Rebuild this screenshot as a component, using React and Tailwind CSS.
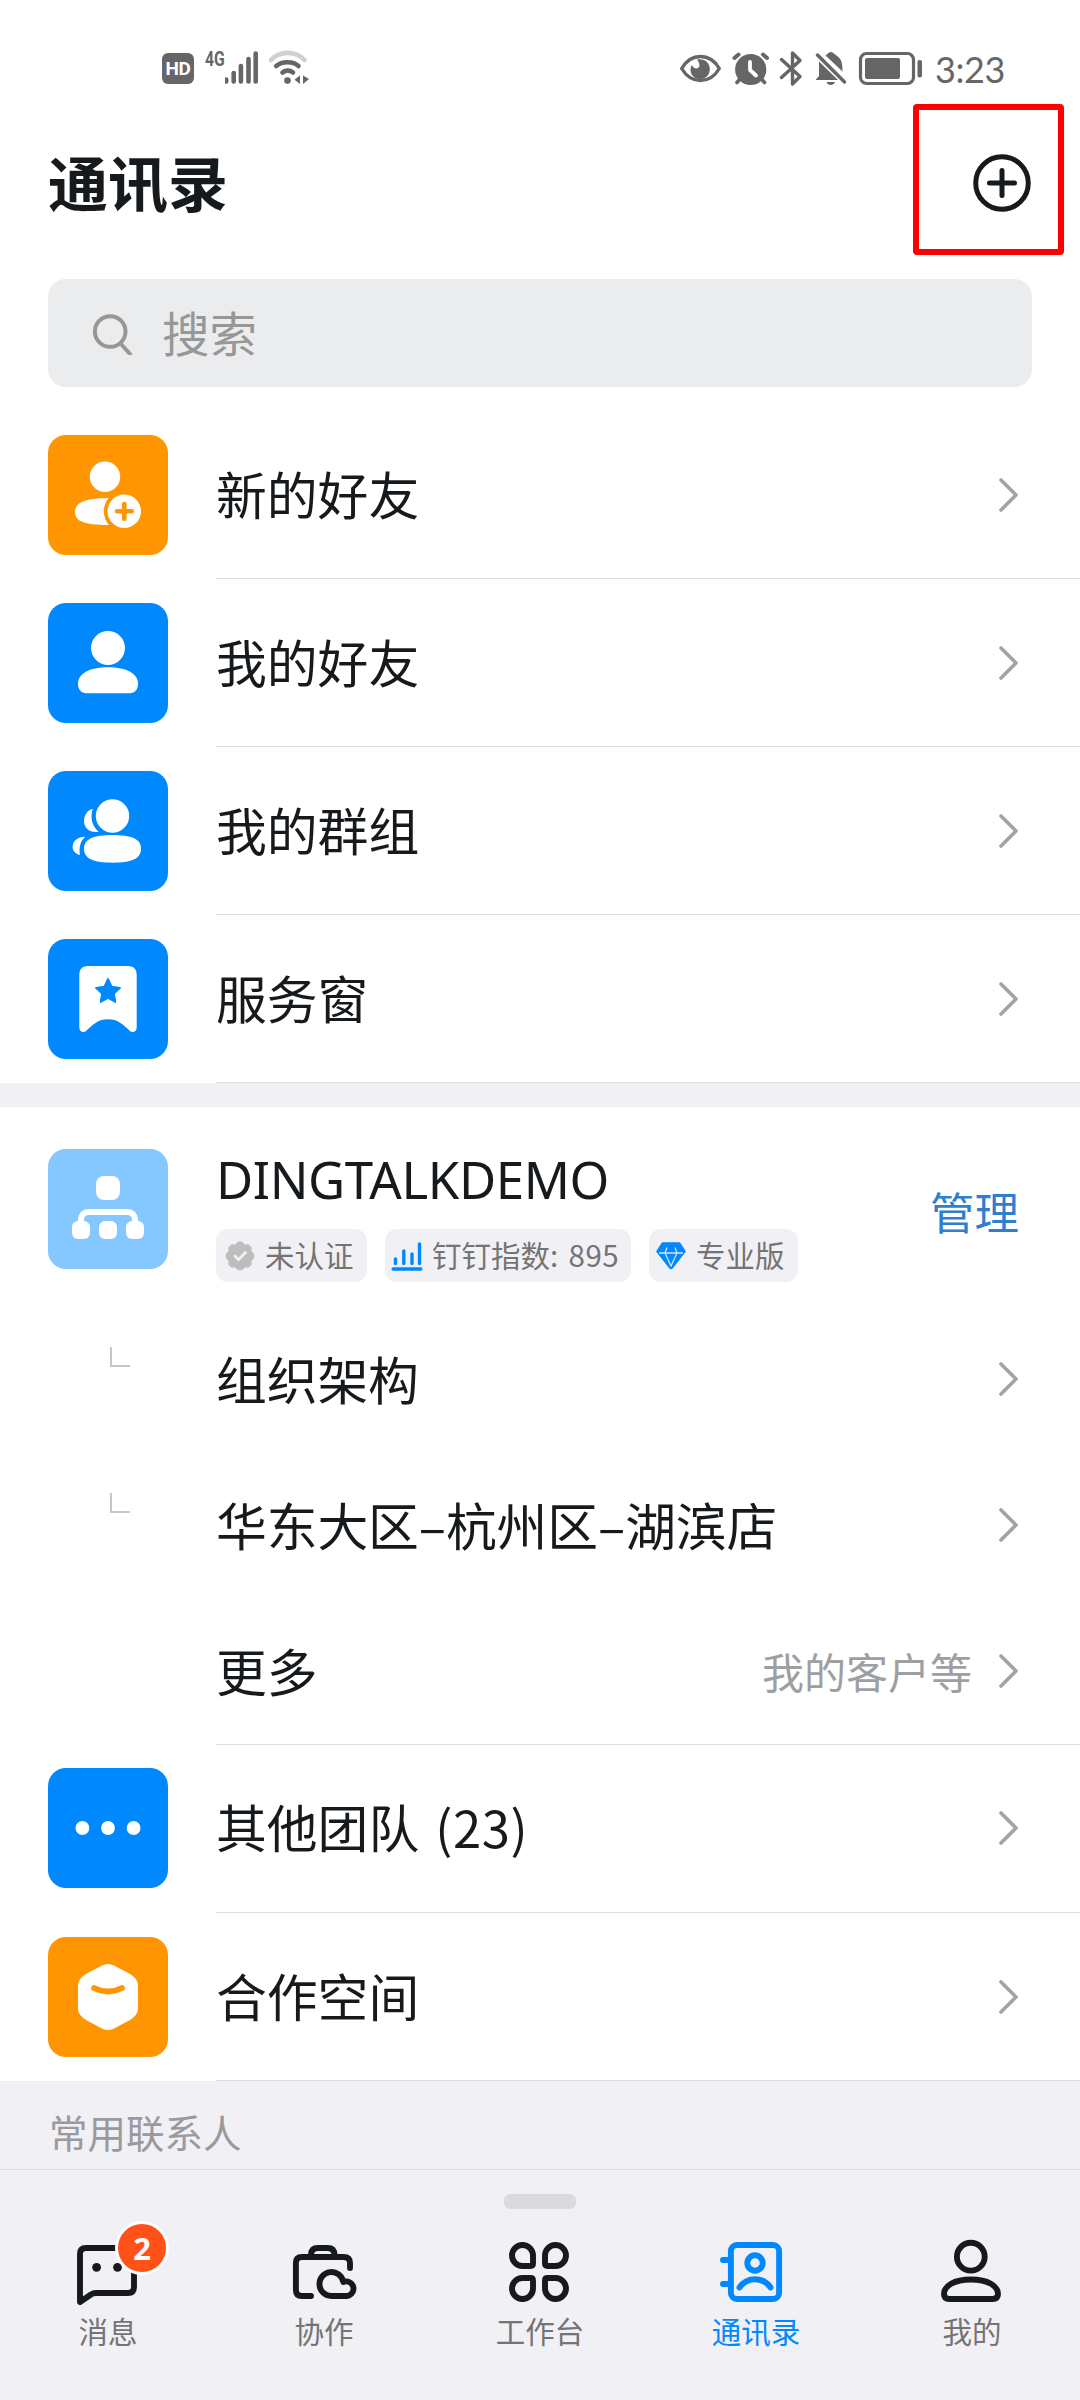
import React from "react";

const CJK = "font-['Noto_Sans_CJK_SC',sans-serif]";

function StatusBar() {
  return (
    <div className="flex h-[93px] shrink-0 items-start pt-[50px] text-[#666666]">
      <div className="ml-[162px] mt-[3px] flex h-[31px] w-[32px] items-center justify-center rounded-[6px] bg-[#666666] font-['Roboto',sans-serif] text-[19px] font-bold leading-none tracking-[-0.5px] text-white">
        HD
      </div>
      <div className="ml-[11px] w-[20px] origin-left scale-x-75 font-['Roboto',sans-serif] text-[21px] font-bold leading-[18px]">
        4G
      </div>
      <svg className="h-[38px] w-[36px]" viewBox="225 50 36 38" fill="none" stroke="#666666" strokeWidth="4.6" strokeLinecap="round">
        <path d="M226.5 79.5V81.5M234 73V81.5M241.2 66V81.5M248.8 59V81.5M256 53.5V81.5" transform="translate(-0.3 0)" />
      </svg>
      <svg className="ml-[8px] h-[38px] w-[42px]" viewBox="269 50 42 38" fill="none" stroke="#666666" strokeWidth="4.6" strokeLinecap="round">
        <path d="M271 60C280 50.500 295.500 50.500 304.500 60" stroke="#d0d0d0" />
        <path d="M276.200 66C282 61 293 61 298.500 66" />
        <path d="M282.500 72.500C285.500 70 290 70 293 72.500" />
        <circle cx="287.500" cy="80.600" r="3.300" fill="#666666" stroke="none" />
        <path d="M300 75.500V84L294.500 79.800ZM303 75.500L309 79L303 84Z" fill="#666666" stroke="none" />
      </svg>
      <svg className="ml-[369px] h-[38px] w-[42px]" viewBox="680 50 42 38" fill="none">
        <path d="M681.700 68.500C691 52.500 710 52.500 719.300 68.500C710 84.500 691 84.500 681.700 68.500Z" stroke="#666666" strokeWidth="3.400" strokeLinejoin="round" />
        <path d="M697 59.500C713 57 714 78.500 700.500 79C690 79 689 68 692 65C694 71 704 69 697 59.500Z" fill="#666666" />
      </svg>
      <svg className="ml-[10px] h-[38px] w-[38px]" viewBox="732 50 38 38" fill="none" strokeLinecap="round">
        <circle cx="750.700" cy="69.500" r="15.600" fill="#666666" />
        <path d="M734.500 58L738.500 54.500M767 58L763 54.500" stroke="#666666" strokeWidth="4" />
        <path d="M740 79L737 82.500M761.500 79L764.500 82.500" stroke="#666666" strokeWidth="3.600" />
        <path d="M750 62V70L756 75.500" stroke="#fff" strokeWidth="3.800" strokeLinejoin="round" />
      </svg>
      <svg className="ml-[9px] h-[38px] w-[25px]" viewBox="779 50 25 38" fill="none" stroke="#666666" strokeWidth="3.400" strokeLinecap="round" strokeLinejoin="round">
        <path d="M781.500 59.500L800 76.500L792.500 84V53L800 60.500L781.500 77.500" />
      </svg>
      <svg className="ml-[10px] h-[38px] w-[34px]" viewBox="814 50 34 38" fill="none">
        <path d="M819 61.500L838 80H815.500L819 76ZM825.500 55.500C828 54 828.500 52 831 52C833.500 52 834.500 54.500 836.500 55.500C842 59 842.500 64 842.500 71.500Z" fill="#666666" />
        <path d="M826.500 82H835C834 86 827.500 86 826.500 82Z" fill="#666666" />
        <path d="M817.500 55L844.500 82" stroke="#666666" strokeWidth="3.500" strokeLinecap="round" />
      </svg>
      <svg className="ml-[10px] h-[38px] w-[65px]" viewBox="858 50 65 38" fill="none">
        <rect x="860.500" y="53.500" width="53" height="30" rx="6" stroke="#666666" strokeWidth="3.200" />
        <rect x="865" y="58" width="35" height="21" rx="2" fill="#666666" />
        <rect x="917.500" y="60" width="4.500" height="17.500" rx="2" fill="#666666" />
      </svg>
      <div className="-mt-[1px] ml-[12px] font-['Lato',sans-serif] text-[36px] leading-[41px] tracking-[-0.4px]">3:23</div>
    </div>
  );
}

function Header() {
  return (
    <header className="flex h-[186px] shrink-0 items-center justify-between pl-[48px] pr-[49px]">
      <h1 className="-mt-[10px] text-[60px] font-bold leading-[60px]">通讯录</h1>
      <div className="relative -mt-[6px] h-[58px] w-[58px]">
        <svg className="h-full w-full" viewBox="0 0 58 58" fill="none" stroke="#171a1d" strokeWidth="5" strokeLinecap="round">
          <circle cx="29" cy="29" r="26.300" />
          <path d="M16.500 29H41.500M29 16.500V41.500" />
        </svg>
        <div className="absolute -left-[60px] -top-[50px] h-[151px] w-[151px] rounded-[4px] border-[6px] border-[#ff0000]" />
      </div>
    </header>
  );
}

function Search() {
  return (
    <div className="mx-[48px] mb-[24px] flex h-[108px] shrink-0 items-center rounded-[18px] bg-[#ebecee] pl-[44px] text-[#979797]">
      <svg className="h-[44px] w-[44px]" viewBox="0 0 44 44" fill="none" stroke="#979797" strokeWidth="4" strokeLinecap="round">
        <circle cx="18.200" cy="20.500" r="15.300" />
        <path d="M29 33L38 43" />
      </svg>
      <span className="-mt-[3px] ml-[26px] text-[47.500px] leading-[60px]">搜索</span>
    </div>
  );
}

function Chevron() {
  return (
    <svg className="h-[40px] w-[24px]" viewBox="0 0 24 40" fill="none" stroke="#a2a3a5" strokeWidth="3.600" strokeLinecap="round" strokeLinejoin="round">
      <path d="M4 5L19 20L4 35" />
    </svg>
  );
}

function Tile({ className, children }) {
  return (
    <div className={`h-[120px] w-[120px] shrink-0 rounded-[18px] ${className}`}>
      <svg className="h-full w-full" viewBox="0 0 120 120" fill="none">
        {children}
      </svg>
    </div>
  );
}

function Row({ icon, label, raised }) {
  return (
    <div className="flex h-[168px] shrink-0 items-center gap-[48px] pl-[48px]">
      {icon}
      <div className={`flex h-full flex-1 items-center justify-between border-b border-[#dcdddf] pr-[59px] ${raised ? "pb-[2px]" : ""}`}>
        <span className="-mt-[3px] whitespace-nowrap text-[50.800px] leading-[60px]">{label}</span>
        <Chevron />
      </div>
    </div>
  );
}

const NewFriend = (
  <Tile className="bg-[#ff9500]">
    <circle cx="57" cy="41.700" r="15.200" fill="#fff" />
    <path d="M64 63C40 63 27 66 27 77C27 88 40 90 64 90Z" fill="#fff" />
    <circle cx="76.300" cy="76.300" r="20.500" fill="#ff9500" />
    <circle cx="76.300" cy="76.300" r="16.700" fill="#fff" />
    <path d="M69 76.300H83.700M76.300 69V83.700" stroke="#ff9500" strokeWidth="4.600" strokeLinecap="round" />
  </Tile>
);

const MyFriend = (
  <Tile className="bg-[#0089ff]">
    <circle cx="60" cy="45" r="17" fill="#fff" />
    <path d="M60 64.300C79 64.300 90 71 90 80.500C90 87 87 90.300 80 90.300H40C33 90.300 30 87 30 80.500C30 71 41 64.300 60 64.300Z" fill="#fff" />
  </Tile>
);

const Groups = (
  <Tile className="bg-[#0089ff]">
    <circle cx="64.500" cy="45" r="16.700" fill="#fff" />
    <path d="M64.500 64C83 64 93 67.500 93 77.800C93 88 83 91.700 64.500 91.700C46 91.700 36 88 36 77.800C36 67.500 46 64 64.500 64Z" fill="#fff" />
    <path d="M44.700 38C33 40 31.500 63.500 50.700 60.700C44 55 42 47 44.700 38Z" fill="#fff" />
    <path d="M37.300 65.700C22 66 21 81.500 32 84C31 78 31.500 70.500 37.300 65.700Z" fill="#fff" />
  </Tile>
);

const Service = (
  <Tile className="bg-[#0089ff]">
    <path d="M31.300 36C31.300 30 34.500 27 40 27H80C85.500 27 88.700 30 88.700 36V88.500C88.700 93 84.500 94.500 81.500 91.500C74 85 70 80.300 60 80.300C50 80.300 46 85 38.500 91.500C35.500 94.500 31.300 93 31.300 88.500Z" fill="#fff" />
    <path d="M60 40L63.600 47.600L72 48.800L65.900 54.700L67.400 63L60 59L52.600 63L54.100 54.700L48 48.800L56.400 47.600Z" fill="#0089ff" stroke="#0089ff" strokeWidth="1.800" strokeLinejoin="round" />
  </Tile>
);

const Org = (
  <Tile className="bg-[#85c7ff]">
    <rect x="48" y="27" width="24" height="24" rx="8" fill="#fff" />
    <path d="M33 76V71C33 66 36 63 41 63H79C84 63 87 66 87 71V76" stroke="#fff" strokeWidth="6" />
    <rect x="24" y="72" width="18" height="18" rx="6" fill="#fff" />
    <rect x="51" y="72" width="18" height="18" rx="6" fill="#fff" />
    <rect x="78" y="72" width="18" height="18" rx="6" fill="#fff" />
  </Tile>
);

const Others = (
  <Tile className="-mt-[2px] bg-[#0089ff]">
    <circle cx="34.400" cy="60" r="6.900" fill="#fff" />
    <circle cx="60" cy="60" r="6.900" fill="#fff" />
    <circle cx="85.600" cy="60" r="6.900" fill="#fff" />
  </Tile>
);

const Space = (
  <Tile className="bg-[#ff9500]">
    <path d="M54 28.500C58 26.500 62 26.500 66 28.500L82 37C87.500 40.500 90 44 90 49V71C90 76 87.500 79.500 82 83L66 91.500C62 93.500 58 93.500 54 91.500L38 83C32.500 79.500 30 76 30 71V49C30 44 32.500 40.500 38 37Z" fill="#fff" />
    <path d="M46 51C55 55.500 65 55.500 74 51" stroke="#ff9500" strokeWidth="5.800" strokeLinecap="round" />
  </Tile>
);

function Tag({ className, icon, children }) {
  return (
    <div className={`flex h-[53px] items-center rounded-[12px] bg-[#f1f0f5] text-[29.500px] leading-[40px] text-[#747474] ${className}`}>
      {icon}
      <span className="-mt-[3px] whitespace-nowrap">{children}</span>
    </div>
  );
}

const VerifiedIcon = (
  <svg className="ml-[9px] mr-[10px] h-[30px] w-[30px]" viewBox="-15 -15 30 30" fill="none">
    <g fill="#bdbdbe">
      <circle r="12" />
      <circle cx="0" cy="-9.500" r="5" />
      <circle cx="6.700" cy="-6.700" r="5" />
      <circle cx="9.500" cy="0" r="5" />
      <circle cx="6.700" cy="6.700" r="5" />
      <circle cx="0" cy="9.500" r="5" />
      <circle cx="-6.700" cy="6.700" r="5" />
      <circle cx="-9.500" cy="0" r="5" />
      <circle cx="-6.700" cy="-6.700" r="5" />
    </g>
    <path d="M-5 0L-1.500 3.800L5.500 -3.500" stroke="#f1f0f5" strokeWidth="2.800" strokeLinecap="round" strokeLinejoin="round" />
  </svg>
);

const IndexIcon = (
  <svg className="ml-[6px] mr-[9px] h-[30px] w-[32px]" viewBox="0 0 32 30" fill="none" stroke="#0089ff" strokeWidth="3.400" strokeLinecap="round">
    <path d="M4.500 18V22.500M12.800 10V22.500M21 13V22.500M28.500 3V22.500M2.200 28H29.800" />
  </svg>
);

const DiamondIcon = (
  <svg className="ml-[7px] mr-[10px] h-[28px] w-[30px]" viewBox="0 0 30 28" fill="none">
    <path d="M6.500 1H23.500L29 9.500L16.500 25.500Q15 27.500 13.500 25.500L1 9.500Z" fill="#0089ff" stroke="#0089ff" strokeWidth="1.500" strokeLinejoin="round" />
    <path d="M3 11H27M11 5.500L9 11L15 24L21 11L19 5.500" stroke="#cfe6fb" strokeWidth="1.300" />
  </svg>
);

function OrgHeader() {
  return (
    <div className="flex h-[202px] shrink-0 items-start pl-[48px] pt-[42px]">
      {Org}
      <div className="ml-[48px] flex-1">
        <div className="h-[60px] whitespace-nowrap font-['Noto_Sans',sans-serif] text-[51px] leading-[60px] tracking-[-0.4px]">DINGTALKDEMO</div>
        <div className="mt-[20px] flex gap-[18px]">
          <Tag className="w-[151px]" icon={VerifiedIcon}>未认证</Tag>
          <Tag className="w-[246px]" icon={IndexIcon}>
            钉钉指数:<span className="ml-[3px] tracking-[0.6px]"> 895</span>
          </Tag>
          <Tag className="w-[149px]" icon={DiamondIcon}>专业版</Tag>
        </div>
      </div>
      <span className="mr-[61px] mt-[32px] text-[44.500px] leading-[60px] text-[#2f7fd0]">管理</span>
    </div>
  );
}

function SubRow({ label, note, branch }) {
  return (
    <div className="flex h-[146px] shrink-0 items-center pb-[6px]">
      <div className="h-[140px] w-[216px] pl-[110px] pt-[38px]">
        {branch && <div className="h-[20px] w-[20px] border-b-2 border-l-2 border-[#c6c6c6]" />}
      </div>
      <span className="-mt-[3px] flex-1 whitespace-nowrap text-[50.800px] leading-[60px] tracking-[-0.1px]">{label}</span>
      {note && <span className="-mt-[1px] mr-[25px] text-[42px] leading-[60px] text-[#9d9fa1]">{note}</span>}
      <div className="mr-[59px]">
        <Chevron />
      </div>
    </div>
  );
}

const tabs = [
  {
    label: "消息",
    badge: "2",
    icon: (
      <>
        <path d="M8 66V18Q8 12 14 12H56Q62 12 62 18V51Q62 57 56 57H24Q21 57 19 58.500L8 66Z" />
        <circle cx="24.600" cy="31.300" r="4.400" fill="currentColor" stroke="none" />
        <circle cx="45.500" cy="31.300" r="4.400" fill="currentColor" stroke="none" />
      </>
    ),
  },
  {
    label: "协作",
    icon: (
      <>
        <path d="M23 60H14Q7.900 60 7.900 54V27Q7.900 21 14 21H55.500Q62 21 62 27V32" />
        <path d="M23 20V19Q23 12 30 12H39.500Q46.500 12 46.500 19V20" />
        <path d="M43.800 60A12 12 0 1 1 55.300 46A7.300 7.300 0 1 1 58 60Z" />
      </>
    ),
  },
  {
    label: "工作台",
    icon: (
      <>
        <path id="petal" d="M18.500 9A10.500 10.500 0 0 1 29 19.500V27.500Q29 30 26.500 30H18.500A10.500 10.500 0 0 1 18.500 9Z" />
        <use href="#petal" transform="translate(70 0) scale(-1 1)" />
        <use href="#petal" transform="translate(0 72) scale(1 -1)" />
        <use href="#petal" transform="translate(70 72) scale(-1 -1)" />
      </>
    ),
  },
  {
    label: "通讯录",
    active: true,
    icon: (
      <>
        <rect x="10.900" y="9" width="48.200" height="54" rx="6" />
        <path d="M3 24H9M3 48H9" />
        <circle cx="35" cy="27" r="7.700" />
        <path d="M19.500 51.500C27 40.500 43 40.500 50.500 51.500" />
      </>
    ),
  },
  {
    label: "我的",
    icon: (
      <>
        <circle cx="34.800" cy="20.700" r="13.900" />
        <path d="M35 43.500C52 43.500 62 50 62 58Q62 63 56.500 63H13.500Q8 63 8 58C8 50 18 43.500 35 43.500Z" />
      </>
    ),
  },
];

function TabBar() {
  return (
    <nav className="flex h-[231px] shrink-0 flex-col border-t border-[#dddde1]">
      <div className="mx-auto mt-[24px] h-[15px] w-[72px] rounded-[6px] bg-[#d9dadb]" />
      <div className="mt-[27px] grid grid-cols-5">
        {tabs.map((t) => (
          <div key={t.label} className={`flex flex-col items-center ${t.active ? "text-[#0089ff]" : "text-[#171a1d]"}`}>
            <div className="relative h-[72px] w-[72px]">
              <svg className="h-full w-full" viewBox="0 0 72 72" fill="none" stroke="currentColor" strokeWidth="5.900" strokeLinecap="round" strokeLinejoin="round">
                {t.icon}
              </svg>
              {t.badge && (
                <div className="absolute left-[43px] -top-[15px] flex h-[54px] w-[54px] items-center justify-center rounded-full border-[3px] border-white bg-[#ff5219] font-['Noto_Sans',sans-serif] text-[31px] font-bold leading-none text-white">
                  {t.badge}
                </div>
              )}
            </div>
            <span className={`mt-[2px] text-[29.500px] leading-[40px] ${t.active ? "text-[#0089ff]" : "text-[#747476]"}`}>{t.label}</span>
          </div>
        ))}
      </div>
    </nav>
  );
}

export default function App() {
  return (
    <div className={`flex h-[2400px] w-[1080px] flex-col overflow-hidden bg-white text-[#171a1d] ${CJK}`}>
      <StatusBar />
      <Header />
      <Search />
      <Row icon={NewFriend} label="新的好友" />
      <Row icon={MyFriend} label="我的好友" />
      <Row icon={Groups} label="我的群组" />
      <Row icon={Service} label="服务窗" />
      <div className="h-[24px] shrink-0 bg-[#f1f0f5]" />
      <OrgHeader />
      <div className="flex shrink-0 flex-col">
        <SubRow label="组织架构" branch />
        <SubRow label="华东大区–杭州区–湖滨店" branch />
        <SubRow label="更多" note="我的客户等" />
      </div>
      <div className="-mt-[3px] ml-[216px] h-px shrink-0 bg-[#dcdddf]" />
      <Row
        icon={Others}
        raised
        label={
          <>
            其他团队<span className="ml-[4px] tracking-[0.6px]"> (23)</span>
          </>
        }
      />
      <Row icon={Space} label="合作空间" />
      <div className="flex flex-1 flex-col bg-[#f1f0f5]">
        <div className="flex h-[88px] shrink-0 items-center pl-[49px] pt-[12px] text-[38.500px] leading-[50px] text-[#9a9a9e]">常用联系人</div>
        <TabBar />
      </div>
    </div>
  );
}
